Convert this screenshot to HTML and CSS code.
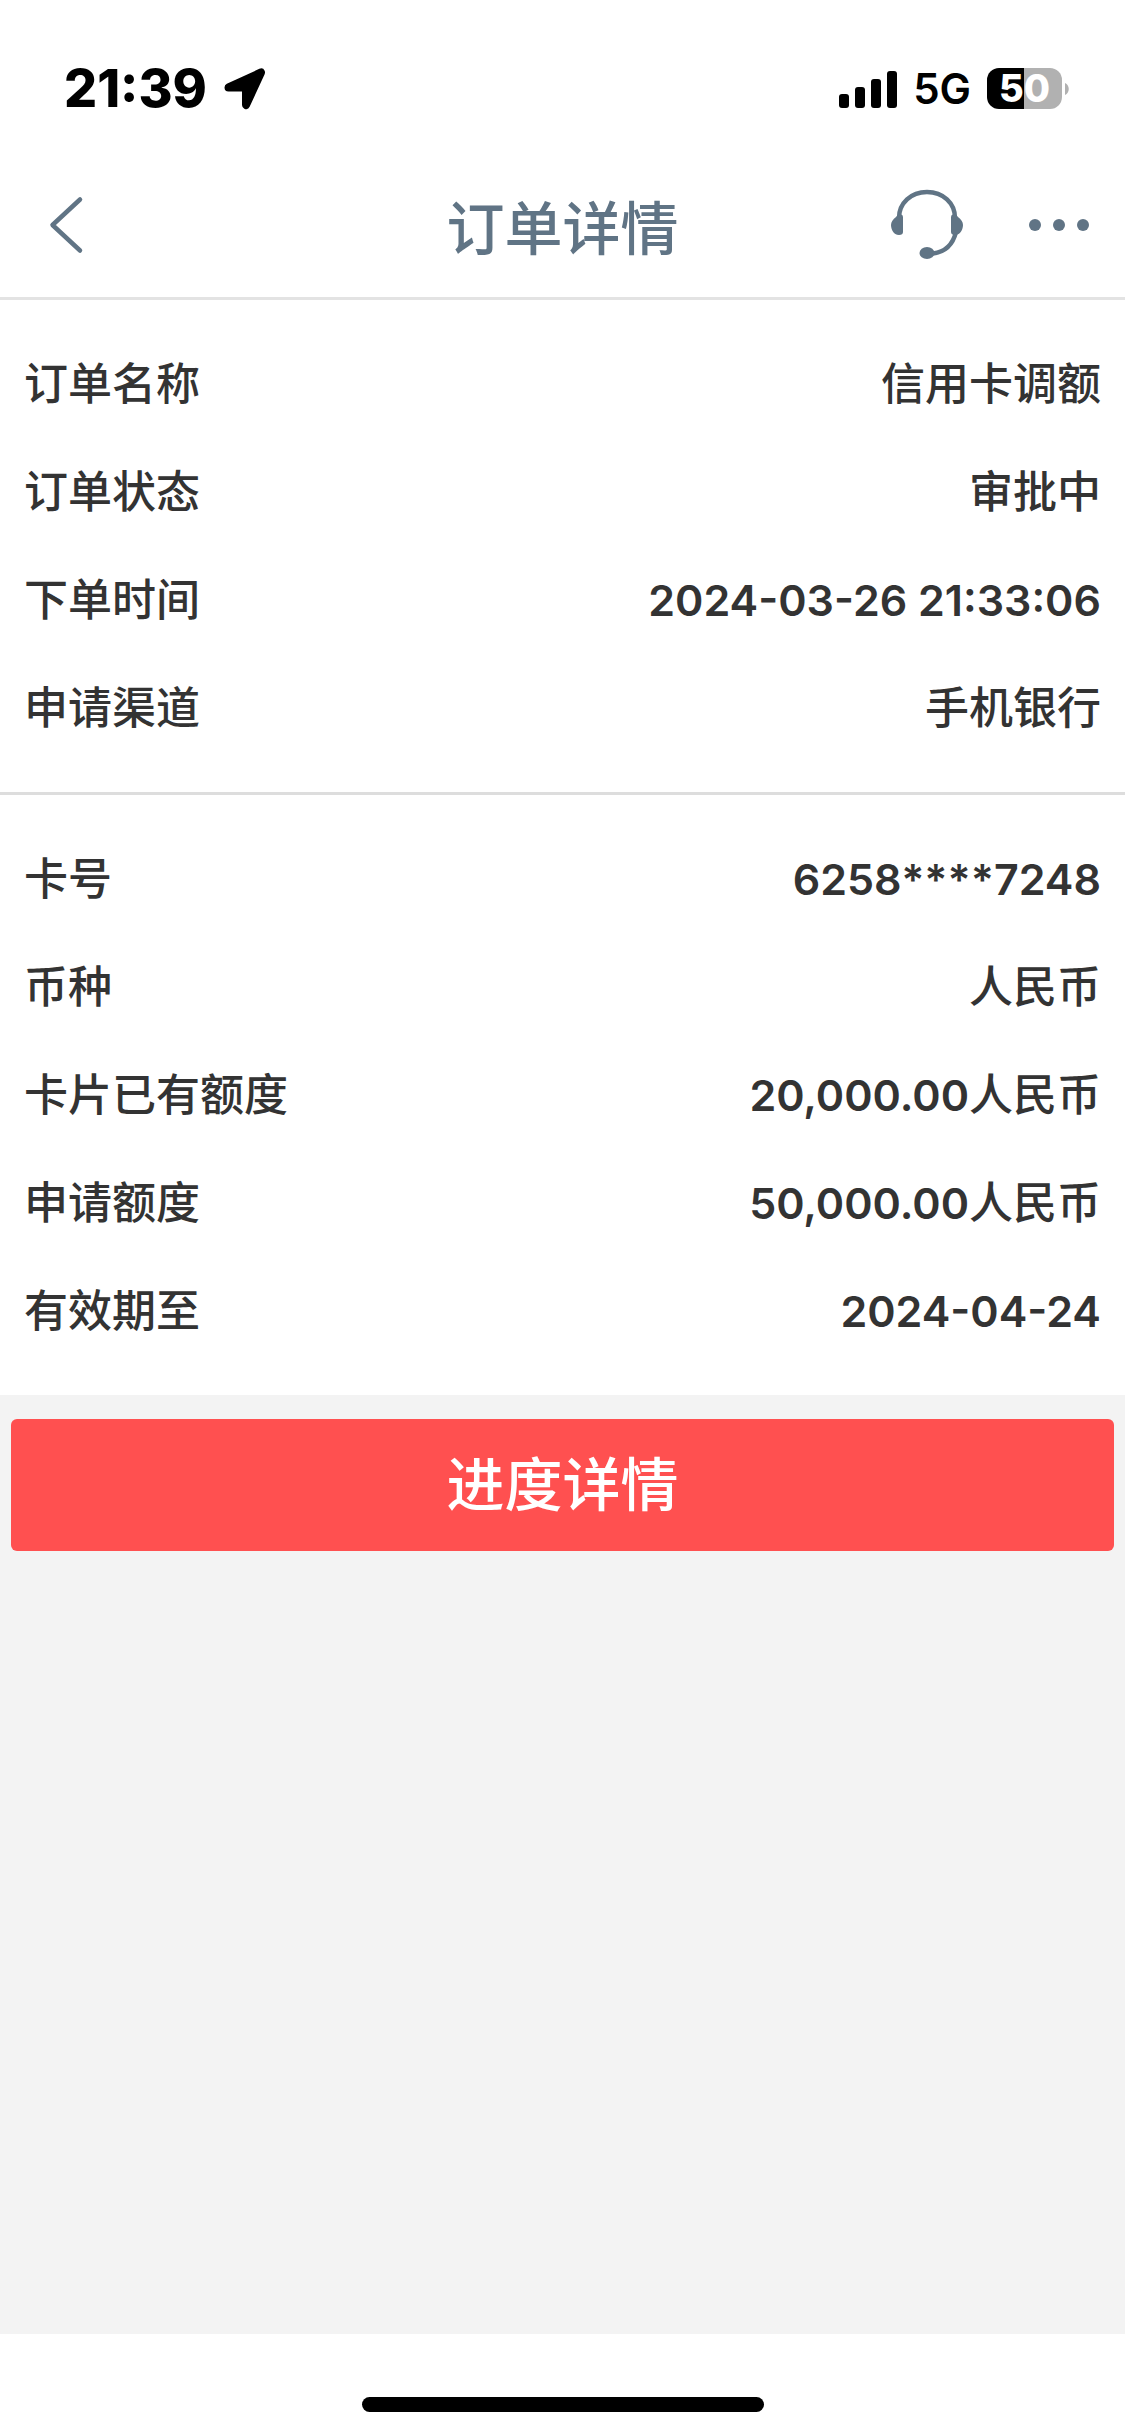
FILE: index.html
```html
<!DOCTYPE html>
<html lang="zh-CN">
<head>
  <meta charset="UTF-8" />
  <meta name="viewport" content="width=device-width, initial-scale=1.0">
  <title>订单详情</title>
  <link rel="stylesheet" href="styles.css">
</head>

<body>

  <div class="status-bar">
    <div class="status-left">
      <span class="status-time">21:39</span>
      <svg class="icon-location" width="44" height="44" viewBox="0 0 44 44">
        <path d="M5.500 20.500 L38 5.500 L23 38 V20.500 Z" fill="#000" stroke="#000" stroke-width="8" stroke-linejoin="round" />
      </svg>
    </div>
    <div class="status-right">
      <svg width="58" height="38" viewBox="0 0 58 38">
        <rect x="0" y="24" width="10" height="14" rx="3" />
        <rect x="16" y="17" width="10" height="21" rx="3" />
        <rect x="32" y="9" width="10" height="29" rx="3" />
        <rect x="48" y="1" width="10" height="37" rx="3" />
      </svg>
      <span class="network">5G</span>
      <div class="battery">
        <span class="battery-level">50</span>
        <svg width="4" height="12" viewBox="0 0 4 12">
          <path d="M0 0 C5 2 5 10 0 12 Z" fill="#b1b1b1" />
        </svg>
      </div>
    </div>
  </div>

  <header class="nav">
    <button class="nav-btn nav-back" type="button" aria-label="返回">
      <svg width="36" height="60" viewBox="0 0 36 60">
        <path d="M32 4.500 L4.500 30 L32 55.500" fill="none" stroke="#607485" stroke-width="4.5" stroke-linecap="round" stroke-linejoin="round" />
      </svg>
    </button>
    <h1 class="nav-title">订单详情</h1>
    <div class="nav-actions">
      <button class="nav-btn" type="button" aria-label="客服">
        <svg width="72" height="78" viewBox="0 0 72 78">
          <g fill="none" stroke="#607485" stroke-width="4.5">
            <path d="M8 32 C8 17 20 6 36 6 S64 17 64 32" />
            <path d="M65 46 C62 58 54 66 42 67.5" />
          </g>
          <g fill="#607485">
            <path d="M5 31 Q6 28.500 9 28.500 H10 Q12 28.500 12 31 V46 Q12 49 8 49 C2.500 49 0 43 0 39 C0 36 2 33 5 31 Z" />
            <path d="M67 31 Q66 28.500 63 28.500 H62 Q60 28.500 60 31 V46 Q60 49 64 49 C69.500 49 72 43 72 39 C72 36 70 33 67 31 Z" />
            <ellipse cx="36" cy="67" rx="7.500" ry="6" />
          </g>
        </svg>
      </button>
      <button class="nav-btn" type="button" aria-label="更多">
        <svg width="60" height="12" viewBox="0 0 60 12" fill="#607485">
          <circle cx="6" cy="6" r="6" />
          <circle cx="30" cy="6" r="6" />
          <circle cx="54" cy="6" r="6" />
        </svg>
      </button>
    </div>
  </header>

  <main class="content">
    <dl class="info">
      <div class="row"><dt>订单名称</dt><dd>信用卡调额</dd></div>
      <div class="row"><dt>订单状态</dt><dd>审批中</dd></div>
      <div class="row"><dt>下单时间</dt><dd><span class="num">2024-03-26 21:33:06</span></dd></div>
      <div class="row"><dt>申请渠道</dt><dd>手机银行</dd></div>
    </dl>

    <dl class="info">
      <div class="row"><dt>卡号</dt><dd><span class="num">6258****7248</span></dd></div>
      <div class="row"><dt>币种</dt><dd>人民币</dd></div>
      <div class="row"><dt>卡片已有额度</dt><dd><span class="num">20,000.00</span>人民币</dd></div>
      <div class="row"><dt>申请额度</dt><dd><span class="num">50,000.00</span>人民币</dd></div>
      <div class="row"><dt>有效期至</dt><dd><span class="num">2024-04-24</span></dd></div>
    </dl>

    <div class="actions">
      <button class="progress-btn" type="button">进度详情</button>
    </div>
  </main>

  <footer class="home-area">
    <div class="home-bar"></div>
  </footer>

</body>
</html>
```
FILE: styles.css
```css
* {
  box-sizing: border-box;
}

body {
  margin: 0;
  min-height: 100vh;
  display: flex;
  flex-direction: column;
  background: #fff;
  color: #333;
  font-family: Inter, "Noto Sans CJK SC", sans-serif;
}

svg {
  display: block;
}

button {
  border: none;
  padding: 0;
  font-family: inherit;
}

/* status bar */
.status-bar {
  display: flex;
  justify-content: space-between;
  align-items: center;
  height: 153px;
  padding: 24px 56px 0 64px;
  color: #000;
}

.status-left,
.status-right {
  display: flex;
  align-items: center;
  gap: 16px;
}

.status-time {
  font-size: 52px;
  font-weight: 800;
}

.network {
  font-size: 42px;
  font-weight: 600;
}

.battery {
  display: flex;
  align-items: center;
  gap: 3px;
}

.battery-level {
  width: 75px;
  height: 41px;
  border-radius: 12px;
  background: linear-gradient(to right, #000 50%, #b1b1b1 50%);
  color: #fff;
  font-size: 38px;
  font-weight: 800;
  line-height: 41px;
  text-align: center;
}

/* title bar */
.nav {
  display: grid;
  grid-template-columns: 1fr auto 1fr;
  align-items: center;
  height: 147px;
  padding: 0 36px;
  border-bottom: 3px solid #e3e3e3;
}

.nav-btn {
  background: none;
}

.nav-back {
  padding-left: 12px;
}

.nav-title {
  margin: 0;
  color: #607485;
  font-size: 58px;
  font-weight: 500;
}

.nav-actions {
  display: flex;
  justify-content: flex-end;
  align-items: center;
  gap: 66px;
}

/* order details */
.content {
  flex: 1;
  background: #f3f3f3;
}

.info {
  margin: 0;
  padding: 30px 24px;
  background: #fff;
}

.info + .info {
  border-top: 3px solid #ddd;
}

.row {
  display: flex;
  justify-content: space-between;
  font-size: 44px;
  font-weight: 500;
  line-height: 108px;
}

.row dd {
  margin: 0;
}

.num {
  font-size: 43px;
  font-weight: 600;
}

.actions {
  padding: 24px 11px;
}

.progress-btn {
  display: block;
  width: 100%;
  border-radius: 6px;
  background: #ff5050;
  color: #fff;
  font-size: 58px;
  font-weight: 500;
  line-height: 132px;
}

/* home indicator */
.home-area {
  display: flex;
  justify-content: center;
  align-items: flex-end;
  height: 102px;
  padding-bottom: 24px;
}

.home-bar {
  width: 402px;
  height: 15px;
  border-radius: 8px;
  background: #000;
}
```
